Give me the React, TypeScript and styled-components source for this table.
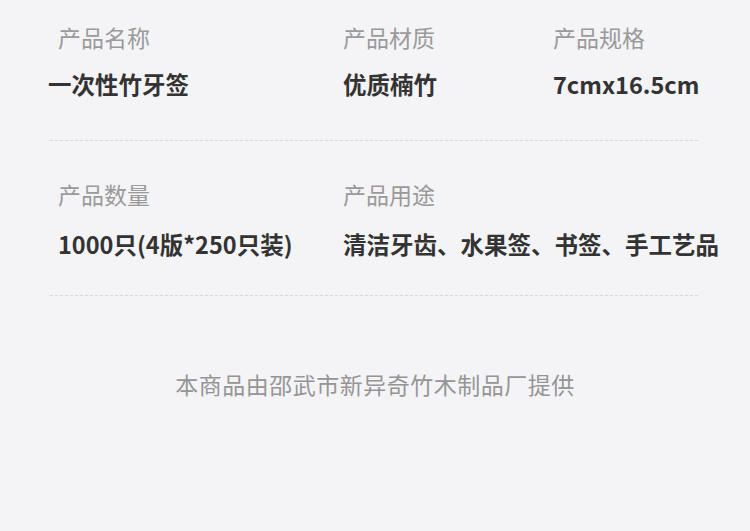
import React from "react";
import styled, { createGlobalStyle } from "styled-components";

const Global = createGlobalStyle`
  html, body { margin: 0; padding: 0; background: #f4f4f6; }
  body { font-family: "Noto Sans CJK SC", "Noto Sans", sans-serif; }
`;

const Page = styled.div`
  width: 750px;
  height: 531px;
  background: #f4f4f6;
  padding-top: 22px;
  box-sizing: border-box;
  overflow: hidden;
`;

const Row = styled.div`
  display: grid;
  grid-template-columns: 285px 210px 1fr;
  padding-left: 58px;
`;

const Cell = styled.div`
  display: flex;
  flex-direction: column;
`;

const Label = styled.div`
  font-size: 23px;
  line-height: 30px;
  color: #9a9a9a;
  white-space: nowrap;
`;

const Value = styled.div<{ $gap: number; $shift?: number }>`
  margin-top: ${(p) => p.$gap}px;
  margin-left: ${(p) => p.$shift ?? 0}px;
  font-size: 23.5px;
  line-height: 30px;
  font-weight: 700;
  color: #333333;
  white-space: nowrap;
`;

const Divider = styled.div<{ $top: number; $bottom: number }>`
  margin: ${(p) => p.$top}px 50px ${(p) => p.$bottom}px;
  height: 1px;
  background: repeating-linear-gradient(
    to right,
    #d9d9d9 0,
    #d9d9d9 3px,
    transparent 3px,
    transparent 5px
  );
`;

const Footer = styled.div`
  margin-top: 72px;
  text-align: center;
  font-size: 23px;
  line-height: 32px;
  letter-spacing: 0.5px;
  color: #959595;
`;

type Item = { label: string; value: string; shift?: number };

const rows: { items: Item[]; gap: number; top: number; bottom: number }[] = [
  {
    items: [
      { label: "产品名称", value: "一次性竹牙签", shift: -10 },
      { label: "产品材质", value: "优质楠竹" },
      { label: "产品规格", value: "7cmx16.5cm" },
    ],
    gap: 17,
    top: 41,
    bottom: 38,
  },
  {
    items: [
      { label: "产品数量", value: "1000只(4版*250只装)" },
      { label: "产品用途", value: "清洁牙齿、水果签、书签、手工艺品" },
    ],
    gap: 20,
    top: 36,
    bottom: 0,
  },
];

export default function App() {
  return (
    <>
      <Global />
      <Page>
        {rows.map((r, i) => (
          <React.Fragment key={i}>
            <Row>
              {r.items.map((it) => (
                <Cell key={it.label}>
                  <Label>{it.label}</Label>
                  <Value $gap={r.gap} $shift={it.shift}>
                    {it.value}
                  </Value>
                </Cell>
              ))}
            </Row>
            <Divider $top={r.top} $bottom={r.bottom} />
          </React.Fragment>
        ))}
        <Footer>本商品由邵武市新异奇竹木制品厂提供</Footer>
      </Page>
    </>
  );
}
